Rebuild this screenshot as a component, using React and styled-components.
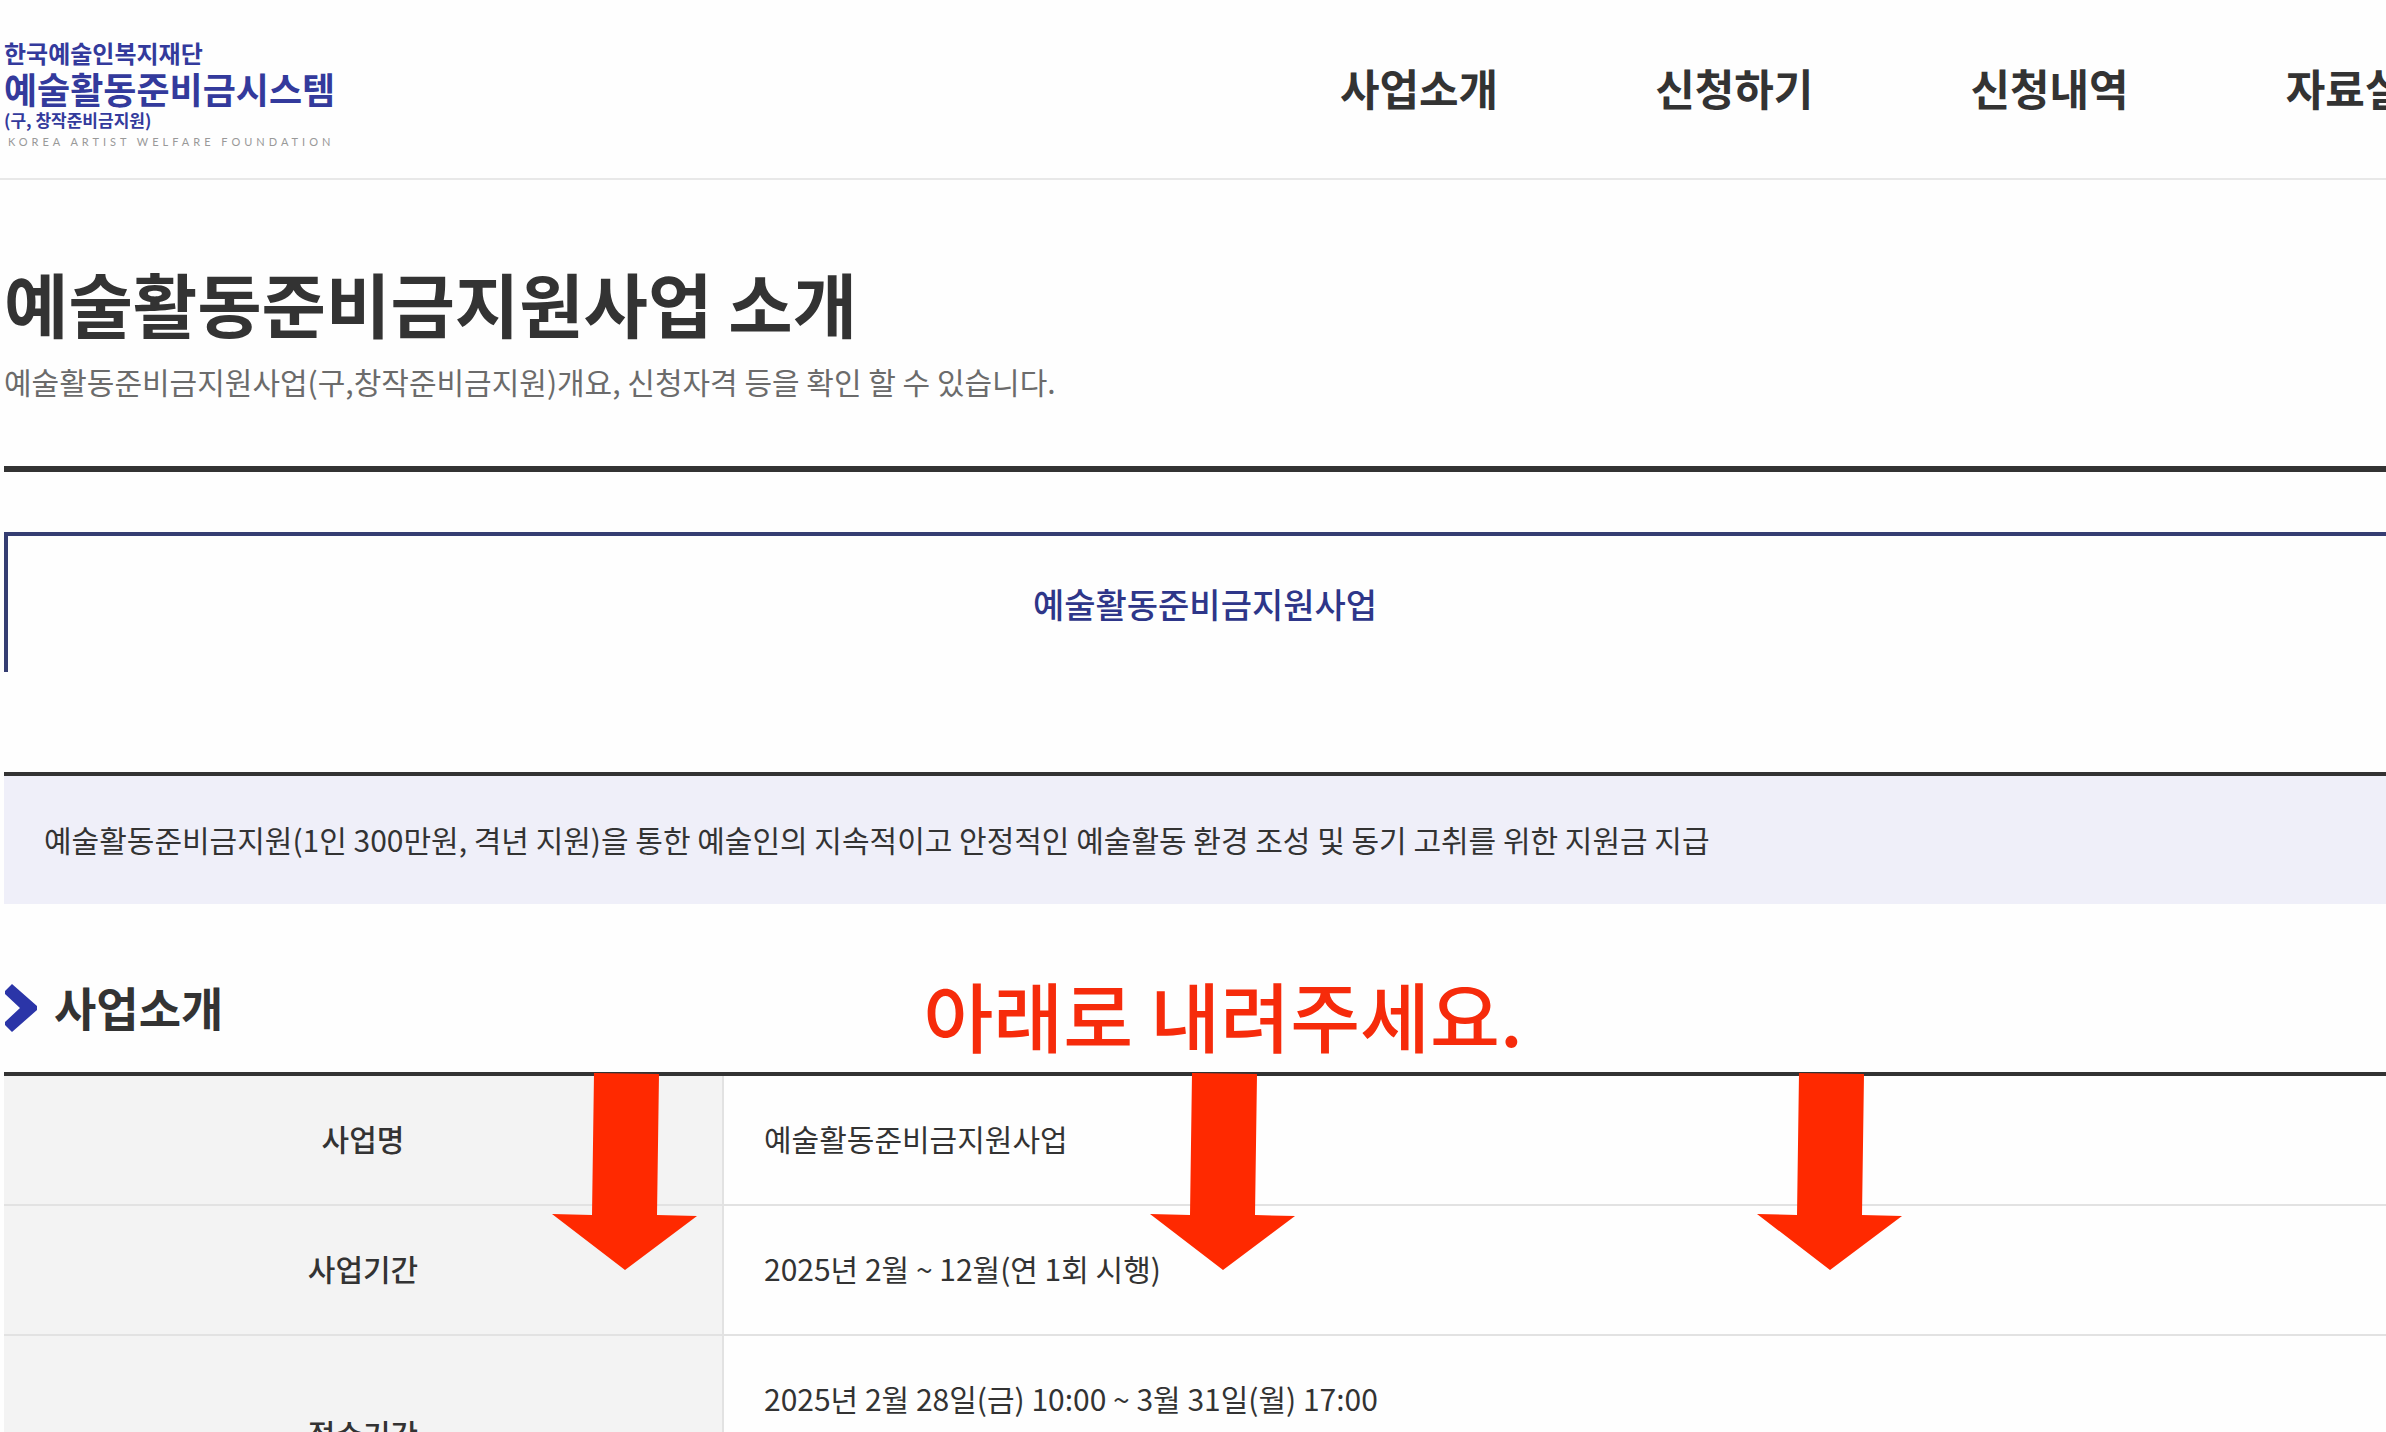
import styled, { createGlobalStyle } from 'styled-components';

const menus = ['사업소개', '신청하기', '신청내역', '자료실'];

const rows = [
  { label: '사업명', value: '예술활동준비금지원사업' },
  { label: '사업기간', value: '2025년 2월 ~ 12월(연 1회 시행)' },
  {
    label: '접수기간',
    value: '2025년 2월 28일(금) 10:00 ~ 3월 31일(월) 17:00',
    tall: true,
  },
];

// 안내 화살표 가로 위치
const arrows = ['23%', '48.1%', '73.6%'];

const App = () => {
  return (
    <Page>
      <GlobalStyle />
      <Header>
        <Logo href='#'>
          <LogoOrg>한국예술인복지재단</LogoOrg>
          <LogoName>예술활동준비금시스템</LogoName>
          <LogoOld>(구, 창작준비금지원)</LogoOld>
          <LogoEng>KOREA ARTIST WELFARE FOUNDATION</LogoEng>
        </Logo>
        <Nav>
          {menus.map((menu) => (
            <NavLink href='#' key={menu}>
              {menu}
            </NavLink>
          ))}
        </Nav>
      </Header>
      <Main>
        <TitleBox>
          <Title>예술활동준비금지원사업 소개</Title>
          <Description>
            예술활동준비금지원사업(구,창작준비금지원)개요, 신청자격 등을 확인 할
            수 있습니다.
          </Description>
        </TitleBox>
        <Tab type='button'>예술활동준비금지원사업</Tab>
        <Notice>
          예술활동준비금지원(1인 300만원, 격년 지원)을 통한 예술인의 지속적이고
          안정적인 예술활동 환경 조성 및 동기 고취를 위한 지원금 지급
        </Notice>
        <SectionHead>
          <svg width='33' height='48' viewBox='0 0 33 48' aria-hidden='true'>
            <path
              d='M8 0 L33 22 V26 L8 48 L1 41 V38 L16 24 L1 10 V7 Z'
              fill='#2b35a8'
            />
          </svg>
          <SubTitle>사업소개</SubTitle>
          <Guide>아래로 내려주세요.</Guide>
        </SectionHead>
        <TableBox>
          <Table>
            <tbody>
              {rows.map((row) => (
                <Row key={row.label} $tall={row.tall}>
                  <th scope='row'>{row.label}</th>
                  <td>{row.value}</td>
                </Row>
              ))}
            </tbody>
          </Table>
          {arrows.map((left) => (
            <Arrow key={left} $left={left} viewBox='0 0 146 198' aria-hidden='true'>
              <path
                d='M42 0 L107 1 L105 142 L145 143 L73 197 L0 141 L40 142 Z'
                fill='#ff2900'
              />
            </Arrow>
          ))}
        </TableBox>
      </Main>
    </Page>
  );
};

const GlobalStyle = createGlobalStyle`
  * {
    box-sizing: border-box;
  }
  body {
    margin: 0;
    background: #fefefe;
    color: #333333;
    font-family: 'Noto Sans CJK KR', sans-serif;
  }
  a {
    color: inherit;
    text-decoration: none;
  }
`;

const Page = styled.div`
  height: 100vh;
  overflow: hidden;
`;

const Header = styled.header`
  display: grid;
  grid-template-columns: 56% 1fr;
  height: 180px;
  padding-left: 4px;
  border-bottom: 2px solid #e8e8e8;
`;

const Logo = styled.a`
  display: flex;
  flex-direction: column;
  padding-top: 38px;
  color: #333a9c;
  font-weight: 700;
`;

const LogoOrg = styled.span`
  font-size: 24px;
  line-height: 30px;
`;

const LogoName = styled.span`
  font-size: 36px;
  line-height: 40px;
`;

const LogoOld = styled.span`
  font-size: 17px;
  line-height: 24px;
`;

const LogoEng = styled.span`
  padding-left: 4px;
  color: #999999;
  font-family: Lato, sans-serif;
  font-size: 11px;
  font-weight: 400;
  line-height: 20px;
  letter-spacing: 4px;
`;

const Nav = styled.nav`
  display: flex;
  gap: 157px;
  padding-left: 2px;
  overflow: hidden;
  white-space: nowrap;
`;

const NavLink = styled.a`
  flex-shrink: 0;
  font-size: 43px;
  font-weight: 700;
  line-height: 174px;
`;

const Main = styled.main`
  padding-left: 4px;
`;

const TitleBox = styled.div`
  padding: 73px 0 60px;
  border-bottom: 6px solid #333333;
`;

const Title = styled.h1`
  margin: 0 0 3px;
  font-size: 70px;
  font-weight: 700;
  line-height: 100px;
`;

const Description = styled.p`
  margin: 0;
  color: #6b6b6b;
  font-size: 30px;
  line-height: 50px;
`;

const Tab = styled.button`
  display: block;
  width: 100%;
  height: 140px;
  margin: 60px 0 100px;
  padding: 0 0 2px 16px;
  background: none;
  border: solid #353d72;
  border-width: 4px 0 0 4px;
  color: #2e3689;
  font-family: inherit;
  font-size: 34px;
  font-weight: 500;
`;

const Notice = styled.p`
  margin: 0;
  padding: 38px 40px 40px;
  background: #efeff9;
  border-top: 4px solid #333333;
  font-size: 30px;
  line-height: 50px;
`;

const SectionHead = styled.div`
  position: relative;
  display: flex;
  align-items: center;
  gap: 17px;
  height: 168px;
  padding-top: 40px;
`;

const SubTitle = styled.h2`
  margin: 0;
  padding-bottom: 4px;
  font-size: 46px;
  font-weight: 700;
  line-height: 60px;
`;

const Guide = styled.strong`
  position: absolute;
  left: 38.6%;
  bottom: 3px;
  color: #f62b0b;
  font-size: 76px;
  font-weight: 500;
  line-height: 110px;
`;

const TableBox = styled.div`
  position: relative;
`;

const Table = styled.table`
  width: 100%;
  border-top: 4px solid #333333;
  border-spacing: 0;
  table-layout: fixed;
  font-size: 30px;
  line-height: 48px;
`;

const Row = styled.tr`
  height: ${({ $tall }) => ($tall ? '200px' : '130px')};
  > th,
  > td {
    padding: 38px 40px 42px;
    border-bottom: 2px solid #e2e2e2;
  }
  > th {
    width: 720px;
    background: #f3f3f3;
    border-right: 2px solid #e2e2e2;
    font-weight: 500;
  }
  > td {
    vertical-align: top;
  }
`;

const Arrow = styled.svg`
  position: absolute;
  top: 1px;
  left: ${({ $left }) => $left};
  width: 146px;
  height: 198px;
`;

export default App;
